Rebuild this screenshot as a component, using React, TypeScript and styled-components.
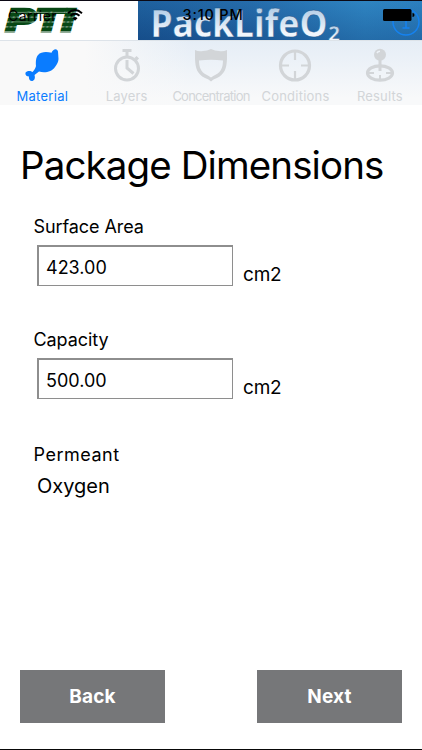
import React from "react";
import styled, { createGlobalStyle } from "styled-components";

const Global = createGlobalStyle`
  * { box-sizing: border-box; }
  body { margin: 0; background: #fff; color: #000; font-family: Inter, "Liberation Sans", sans-serif; }
`;

const Screen = styled.div`
  width: 422px;
  height: 750px;
  display: flex;
  flex-direction: column;
  overflow: hidden;
  border-bottom: 1px solid #080808;
`;

const Header = styled.header`
  position: relative;
  display: flex;
  height: 40px;
  flex: none;
  border-top: 1px solid #0b0914;
`;

const LogoPane = styled.div`
  width: 138px;
  background: #fff;
  svg { display: block; }
`;

const Banner = styled.div`
  flex: 1;
  overflow: hidden;
  background: linear-gradient(180deg, rgba(50, 140, 205, 0.12), rgba(0, 30, 90, 0.22)),
    linear-gradient(90deg, #1c5b98, #2468a7 40%, #2e83c0 80%, #2b7ebd);
  svg { display: block; }
`;

const StatusBar = styled.div`
  position: absolute;
  left: 0;
  right: 0;
  top: 4px;
  height: 20px;
  display: grid;
  grid-template-columns: 1fr auto 1fr;
  align-items: center;
  padding: 0 8px;
`;

const Carrier = styled.div`
  display: flex;
  align-items: center;
  gap: 10px;
  font-size: 14px;
  letter-spacing: 0.45px;
`;

const Clock = styled.div`
  font-size: 14.5px;
  font-weight: 500;
  line-height: 20px;
  letter-spacing: 0.8px;
  transform: translateX(2px);
`;

const Battery = styled.svg`
  justify-self: end;
  margin-right: -1px;
`;

const Tabs = styled.nav`
  height: 65px;
  flex: none;
  display: grid;
  grid-template-columns: repeat(5, 1fr);
  background: linear-gradient(90deg, #f9f9f9 0, #f9f9f9 20%, rgba(249, 249, 249, 0) 45%),
    linear-gradient(180deg, #e5edf6, #f8f9fa 90%);
  box-shadow: inset 0 1px 0 #dde3e9;
`;

const Tab = styled.div<{ $active?: boolean }>`
  display: flex;
  flex-direction: column;
  align-items: center;
  padding-top: 8px;
  color: ${(p) => (p.$active ? "#0a7cff" : "#d2d5d8")};
  svg { display: block; }
`;

const TabLabel = styled.span<{ $spacing: number }>`
  margin-top: 6px;
  font-size: 13px;
  line-height: 16px;
  white-space: nowrap;
  letter-spacing: ${(p) => p.$spacing}px;
  margin-right: -${(p) => Math.max(0, p.$spacing)}px;
`;

const Content = styled.main`
  flex: 1;
  display: flex;
  flex-direction: column;
  padding: 36px 20px 26px;
`;

const Title = styled.h1`
  margin: 0;
  font-size: 38.5px;
  font-weight: 400;
  line-height: 48px;
  letter-spacing: -0.9px;
  white-space: nowrap;
`;

const Fields = styled.section`
  padding: 26px 13px 0;
`;

const Field = styled.div`
  height: 113px;
`;

const Label = styled.label<{ $spacing?: number }>`
  display: block;
  font-size: 18px;
  line-height: 24px;
  padding-left: 0.5px;
  letter-spacing: ${(p) => p.$spacing ?? -0.08}px;
`;

const InputRow = styled.div`
  display: flex;
  align-items: flex-end;
  gap: 10px;
  padding: 6px 0 0 4px;
`;

const Input = styled.input`
  width: 196px;
  height: 41px;
  padding: 3px 7px 0;
  border: solid #8e8e8e;
  border-width: 2px 1px 1px 2px;
  border-radius: 0;
  outline: none;
  background: #fff;
  color: #000;
  font: 18px/22px Inter, "Liberation Sans", sans-serif;
`;

const Unit = styled.span`
  font-size: 19px;
  line-height: 24px;
  margin-bottom: -1px;
  letter-spacing: -0.2px;
`;

const Permeant = styled.div`
  padding-top: 2px;
`;

const Value = styled.div`
  padding: 6px 0 0 4px;
  font-size: 20px;
  line-height: 26px;
`;

const Actions = styled.footer`
  margin-top: auto;
  display: flex;
  justify-content: space-between;
`;

const Button = styled.button`
  width: 145px;
  height: 53px;
  padding: 0;
  border: 0;
  background: #767779;
  color: #fff;
  font: 700 19px/24px Inter, "Liberation Sans", sans-serif;
  letter-spacing: 0.2px;
`;

const Drumstick = () => (
  <svg width="34" height="34" viewBox="0 0 34 34" fill="currentColor">
    <path d="M33 3.5C32 0 28 1 26.5 4.8C22 3.7 16 3.5 13 7C11 9 10.5 14 11 18C10.5 20 9.5 22 7.5 24C6 22.5 2.5 22.5 1 24C-.5 26 1 28.5 4 28.5C3.5 31 5 33.5 7.5 33C10.5 32 10 28.5 9.5 27L14 23.5C20 25.5 27 23.5 30 19C32 16 33.5 14 33.5 11Z" />
  </svg>
);

const Stopwatch = () => (
  <svg width="34" height="34" viewBox="0 0 34 34" fill="none" stroke="currentColor" strokeWidth="3">
    <circle cx="17" cy="20.5" r="11.5" />
    <path d="M12.5 2.5H21.5M17 3V9M17 12V20L23.5 25.5M25.5 9L28 11.5" />
  </svg>
);

const Shield = () => (
  <svg width="34" height="34" viewBox="0 0 34 34" fill="currentColor">
    <path
      fillRule="evenodd"
      d="M1 2Q5 4 9 3Q13 3 17 1Q21 3 25 3Q29 4 33 2L33 11C32.5 20 31 26 23 30Q19 31 17 33.5Q15 31 11 30C3 26 1.5 20 1 11ZM5 12.5C5 19 7 24 12 26.5Q15 28 17 29.5Q19 28 22 26.5C27 24 29 19 29 12.5Q17 11 5 12.5Z"
    />
  </svg>
);

const Target = () => (
  <svg width="34" height="34" viewBox="0 0 34 34" fill="none" stroke="currentColor" strokeWidth="3.2">
    <circle cx="17" cy="17.5" r="14.5" />
    <path strokeWidth="2.2" d="M17 4V12M17 23V31M3 17.5H11M23 17.5H31" />
  </svg>
);

const Joystick = () => (
  <svg width="34" height="34" viewBox="0 0 34 34" fill="none" stroke="currentColor">
    <circle cx="17" cy="6.7" r="6" fill="currentColor" stroke="none" />
    <ellipse cx="17" cy="25" rx="12.5" ry="7.2" strokeWidth="3.2" />
    <path strokeWidth="3" d="M17 11V23" />
    <path strokeWidth="2" d="M17 27V31M5 25H11M23 25H29" />
    <path strokeWidth="1.6" d="M14 5Q15 3.4 17 3.3" stroke="#edf2f7" />
  </svg>
);

const tabs = [
  { label: "Material", Icon: Drumstick, active: true, spacing: 0.3 },
  { label: "Layers", Icon: Stopwatch, spacing: 0.15 },
  { label: "Concentration", Icon: Shield, spacing: -0.75 },
  { label: "Conditions", Icon: Target, spacing: 0.22 },
  { label: "Results", Icon: Joystick, spacing: 0.2 },
];

const fields = [
  { label: "Surface Area", value: "423.00", unit: "cm2" },
  { label: "Capacity", value: "500.00", unit: "cm2" },
];

export default function App() {
  return (
    <>
      <Global />
      <Screen>
        <Header>
          <LogoPane>
            <svg width="138" height="39">
              <defs>
                <pattern id="stripes" width="10" height="4.9" y="6.8" patternUnits="userSpaceOnUse">
                  <rect width="10" height="4.2" fill="#074714" />
                </pattern>
              </defs>
              <g
                fill="url(#stripes)"
                stroke="url(#stripes)"
                strokeWidth="3"
                fontFamily="Liberation Sans"
                fontWeight="700"
                fontStyle="italic"
                fontSize="31"
              >
                <text x="6" y="30.2" textLength="68" lengthAdjust="spacingAndGlyphs">PTI</text>
              </g>
            </svg>
          </LogoPane>
          <Banner>
            <svg width="284" height="39">
              <defs>
                <linearGradient id="silver" x1="0" y1="0" x2="0" y2="1">
                  <stop offset="0.25" stopColor="#b4cee7" />
                  <stop offset="0.7" stopColor="#f1f6fc" />
                </linearGradient>
              </defs>
              <g fill="url(#silver)" stroke="#174f86" strokeWidth="0.4" fontFamily="Noto Sans" fontWeight="700">
                <text x="12.5" y="35.8" fontSize="37" textLength="177" lengthAdjust="spacingAndGlyphs">PackLifeO</text>
                <text x="190" y="40" fontSize="21">2</text>
              </g>
              <g stroke="#1682ef" fill="none" strokeWidth="1.5">
                <circle cx="268" cy="21" r="13" />
                <path d="M265 18H268V27M264.5 27H271.5" />
              </g>
            </svg>
          </Banner>
          <StatusBar>
            <Carrier>
              Carrier
              <svg width="16" height="12" viewBox="0 0 16 12" fill="none" stroke="#000" strokeWidth="1.9">
                <path d="M1 4.2Q8-2 15 4.2M3.5 6.8Q8 2.8 12.5 6.8" />
                <path d="M8 11.8L5.5 9.2Q8 7 10.5 9.2Z" fill="#000" stroke="none" />
              </svg>
            </Carrier>
            <Clock>3:10 PM</Clock>
            <Battery width="32" height="13" viewBox="0 0 32 13">
              <rect x="0" y="0" width="28.5" height="12" rx="1.5" />
              <path d="M29.5 4Q31.5 4 31.5 6Q31.5 8 29.5 8Z" />
            </Battery>
          </StatusBar>
        </Header>
        <Tabs>
          {tabs.map(({ label, Icon, active, spacing }) => (
            <Tab key={label} $active={active}>
              <Icon />
              <TabLabel $spacing={spacing}>{label}</TabLabel>
            </Tab>
          ))}
        </Tabs>
        <Content>
          <Title>Package Dimensions</Title>
          <Fields>
            {fields.map((f) => (
              <Field key={f.label}>
                <Label>{f.label}</Label>
                <InputRow>
                  <Input defaultValue={f.value} />
                  <Unit>{f.unit}</Unit>
                </InputRow>
              </Field>
            ))}
            <Permeant>
              <Label $spacing={0.5}>Permeant</Label>
              <Value>Oxygen</Value>
            </Permeant>
          </Fields>
          <Actions>
            <Button>Back</Button>
            <Button>Next</Button>
          </Actions>
        </Content>
      </Screen>
    </>
  );
}
